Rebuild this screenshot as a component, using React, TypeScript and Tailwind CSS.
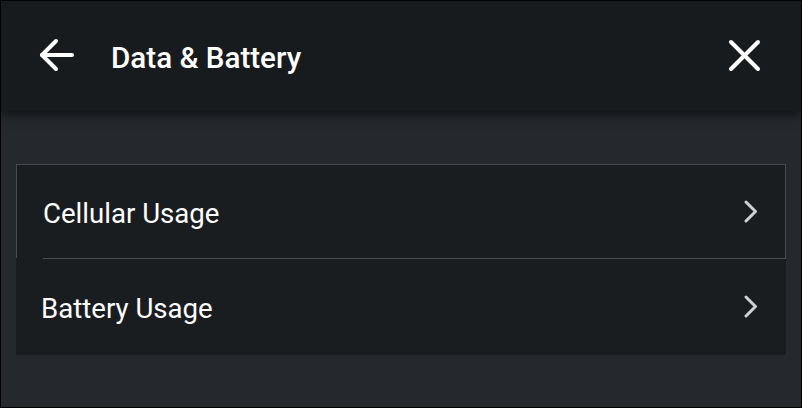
const font = { fontFamily: "Roboto, 'Liberation Sans', sans-serif" };

function BackIcon() {
  return (
    <svg width="38" height="38" viewBox="0 0 38 38" fill="none" stroke="white" strokeWidth="4" strokeLinecap="round" strokeLinejoin="round">
      <path d="M4 18H34" />
      <path d="M18 4L4 18L18 32" />
    </svg>
  );
}

function CloseIcon() {
  return (
    <svg width="34" height="34" viewBox="0 0 34 34" fill="none" stroke="white" strokeWidth="4" strokeLinecap="round">
      <path d="M3 3L30 30" />
      <path d="M30 3L3 30" />
    </svg>
  );
}

function Chevron() {
  return (
    <svg width="16" height="24" viewBox="0 0 16 24" fill="none" stroke="#cfd0d1" strokeWidth="3" strokeLinecap="round" strokeLinejoin="round">
      <path d="M3 2L12.5 11.5L3 21" />
    </svg>
  );
}

function Row({ label, outlined }: { label: string; outlined?: boolean }) {
  return (
    <div
      className={
        outlined
          ? "flex h-[94px] items-center justify-between border-x border-t border-[#46494d] pl-[26px] pr-[26px]"
          : "flex h-[96px] items-center justify-between pl-[25px] pr-[27px]"
      }
    >
      <span className="pt-[4px] text-[27.6px] text-white">{label}</span>
      <Chevron />
    </div>
  );
}

export default function App() {
  return (
    <div className="h-[408px] w-[802px] overflow-hidden border border-black bg-[#25292d]" style={font}>
      <header className="relative z-10 flex h-[110px] items-center bg-[#181b1e] pl-[37px] pr-[39px] shadow-[0_4px_10px_rgba(0,0,0,0.55)]">
        <BackIcon />
        <h1 className="ml-[35px] flex-1 pt-[5px] text-[29.6px] font-medium text-white">Data &amp; Battery</h1>
        <CloseIcon />
      </header>

      <div className="mx-[15px] mt-[53px] bg-[#1a1d20]">
        <Row label="Cellular Usage" outlined />
        <div className="ml-[27px] h-px bg-[#4a4e52]" />
        <Row label="Battery Usage" />
      </div>
    </div>
  );
}
